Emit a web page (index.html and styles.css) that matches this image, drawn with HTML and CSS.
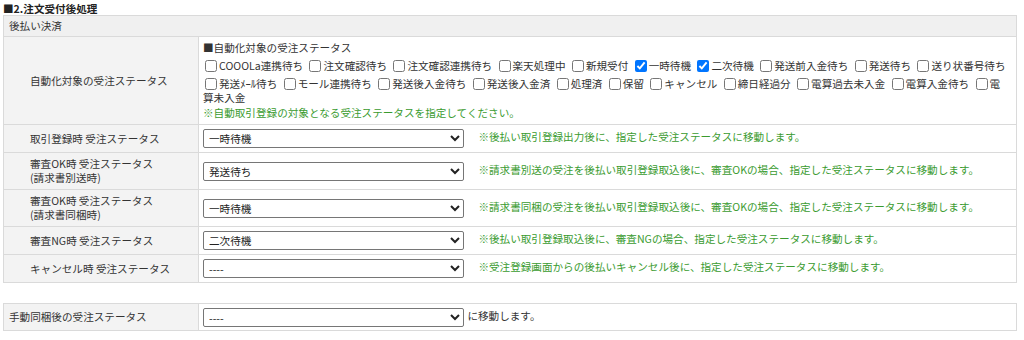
FILE: index.html
```html
<!DOCTYPE html>
<html lang="ja">
<head>
    <meta charset="UTF-8">
    <title>注文受付後処理</title>
    <link rel="stylesheet" href="styles.css">
</head>
<body>
    <h2 class="section-title">■2.注文受付後処理</h2>

    <table class="setting-table">
        <tr>
            <th class="group-head" colspan="2">後払い決済</th>
        </tr>
        <tr>
            <th>自動化対象の受注ステータス</th>
            <td class="status-cell">
                <div>■自動化対象の受注ステータス</div>
                <div class="check-list">
                    <label><input type="checkbox">COOOLa連携待ち</label>
                    <label><input type="checkbox">注文確認待ち</label>
                    <label><input type="checkbox">注文確認連携待ち</label>
                    <label><input type="checkbox">楽天処理中</label>
                    <label><input type="checkbox">新規受付</label>
                    <label><input type="checkbox" checked>一時待機</label>
                    <label><input type="checkbox" checked>二次待機</label>
                    <label><input type="checkbox">発送前入金待ち</label>
                    <label><input type="checkbox">発送待ち</label>
                    <label><input type="checkbox">送り状番号待ち</label><br>
                    <label><input type="checkbox">発送ﾒｰﾙ待ち</label>
                    <label><input type="checkbox">モール連携待ち</label>
                    <label><input type="checkbox">発送後入金待ち</label>
                    <label><input type="checkbox">発送後入金済</label>
                    <label><input type="checkbox">処理済</label>
                    <label><input type="checkbox">保留</label>
                    <label><input type="checkbox">キャンセル</label>
                    <label><input type="checkbox">締日経過分</label>
                    <label><input type="checkbox">電算過去未入金</label>
                    <label><input type="checkbox">電算入金待ち</label>
                    <label><input type="checkbox">電<br>算未入金</label>
                </div>
                <div class="note">※自動取引登録の対象となる受注ステータスを指定してください。</div>
            </td>
        </tr>
        <tr>
            <th>取引登録時 受注ステータス</th>
            <td>
                <select><option>一時待機</option></select>
                <span class="note">※後払い取引登録出力後に、指定した受注ステータスに移動します。</span>
            </td>
        </tr>
        <tr>
            <th>審査OK時 受注ステータス<br>(請求書別送時)</th>
            <td>
                <select><option>発送待ち</option></select>
                <span class="note">※請求書別送の受注を後払い取引登録取込後に、審査OKの場合、指定した受注ステータスに移動します。</span>
            </td>
        </tr>
        <tr>
            <th>審査OK時 受注ステータス<br>(請求書同梱時)</th>
            <td>
                <select><option>一時待機</option></select>
                <span class="note">※請求書同梱の受注を後払い取引登録取込後に、審査OKの場合、指定した受注ステータスに移動します。</span>
            </td>
        </tr>
        <tr>
            <th>審査NG時 受注ステータス</th>
            <td>
                <select><option>二次待機</option></select>
                <span class="note">※後払い取引登録取込後に、審査NGの場合、指定した受注ステータスに移動します。</span>
            </td>
        </tr>
        <tr>
            <th>キャンセル時 受注ステータス</th>
            <td>
                <select><option>----</option></select>
                <span class="note">※受注登録画面からの後払いキャンセル後に、指定した受注ステータスに移動します。</span>
            </td>
        </tr>
    </table>

    <table class="setting-table manual">
        <tr>
            <th>手動同梱後の受注ステータス</th>
            <td>
                <select><option>----</option></select>
                <span class="after">に移動します。</span>
            </td>
        </tr>
    </table>
</body>
</html>
```

FILE: styles.css
```css
body {
    margin: 2px 7px 0 3px;
    font-family: "Noto Sans CJK JP", "Noto Sans", sans-serif;
    font-size: 10.6px;
    line-height: 14px;
    color: #333;
    background-color: #fff;
}

.section-title {
    margin: 0;
    font-size: 10.6px;
    line-height: 13px;
    font-weight: bold;
    color: #222;
}

.setting-table {
    width: 100%;
    border-collapse: collapse;
    border: 1px solid #dadada;
}

.setting-table th,
.setting-table td {
    border: 1px solid #dadada;
    padding: 4px 4px;
    vertical-align: middle;
}

.setting-table th {
    width: 164px;
    padding-left: 26px;
    background-color: #f3f3f3;
    font-weight: normal;
    text-align: left;
}

.setting-table th.group-head {
    padding: 3px 5px;
    height: 14px;
    background-color: #f0f0f0;
}

.setting-table td {
    padding-left: 4px;
}

.status-cell {
    padding-top: 3px;
    padding-bottom: 3px;
}

.check-list {
    line-height: 14px;
}

.check-list label {
    margin-right: 2px;
}

.check-list input {
    width: 12px;
    height: 12px;
    margin: 5px 2px 0 2px;
    vertical-align: -2px;
}

select {
    width: 261px;
    height: 19px;
    padding: 0 0 0 1px;
    font-family: inherit;
    font-size: 10.6px;
    color: #222;
    border: 1px solid #767676;
    border-radius: 2px;
    background-color: #fff;
    vertical-align: middle;
}

.note {
    color: #3a9b2f;
}

td .note {
    margin-left: 12px;
}

.status-cell .note {
    display: block;
    margin-left: 0;
    line-height: 15px;
}

.manual {
    margin-top: 20px;
}

.manual th {
    padding-left: 5px;
    width: 185px;
}

.manual td {
    padding-top: 4px;
    padding-bottom: 3px;
}

.after {
    margin-left: 1px;
}
```
